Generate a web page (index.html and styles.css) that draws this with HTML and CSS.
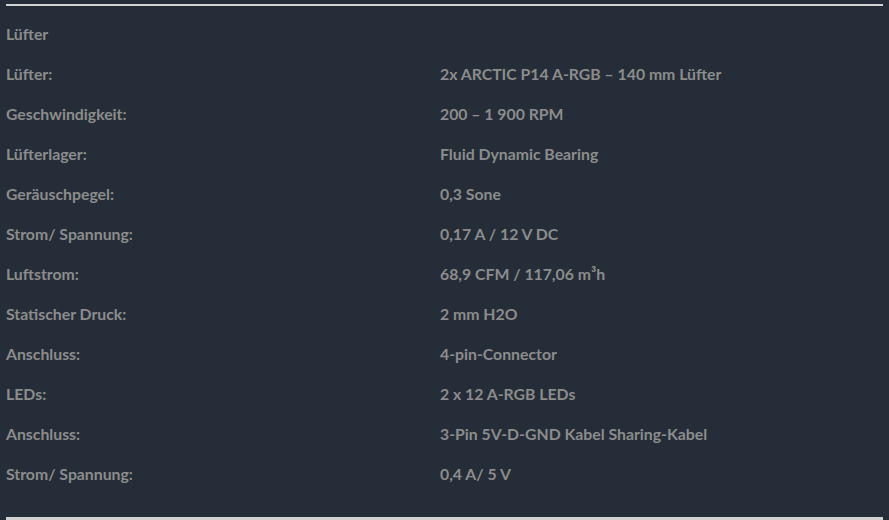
FILE: index.html
```html
<!DOCTYPE html>
<html>
<head>
<meta charset="utf-8">
<link rel="stylesheet" href="styles.css">
</head>
<body>
<div class="specs">
  <div class="rows">
    <div class="row"><div class="label">Lüfter</div><div class="value"></div></div>
    <div class="row"><div class="label">Lüfter:</div><div class="value">2x ARCTIC P14 A-RGB – 140 mm Lüfter</div></div>
    <div class="row"><div class="label">Geschwindigkeit:</div><div class="value">200 – 1 900 RPM</div></div>
    <div class="row"><div class="label">Lüfterlager:</div><div class="value">Fluid Dynamic Bearing</div></div>
    <div class="row"><div class="label">Geräuschpegel:</div><div class="value">0,3 Sone</div></div>
    <div class="row"><div class="label">Strom/ Spannung:</div><div class="value">0,17 A / 12 V DC</div></div>
    <div class="row"><div class="label">Luftstrom:</div><div class="value">68,9 CFM / 117,06 m³h</div></div>
    <div class="row"><div class="label">Statischer Druck:</div><div class="value">2 mm H2O</div></div>
    <div class="row"><div class="label">Anschluss:</div><div class="value">4-pin-Connector</div></div>
    <div class="row"><div class="label">LEDs:</div><div class="value">2 x 12 A-RGB LEDs</div></div>
    <div class="row"><div class="label">Anschluss:</div><div class="value">3-Pin 5V-D-GND Kabel Sharing-Kabel</div></div>
    <div class="row"><div class="label">Strom/ Spannung:</div><div class="value">0,4 A/ 5 V</div></div>
  </div>
</div>
</body>
</html>
```

FILE: styles.css
```css
html, body {
  margin: 0;
  padding: 0;
  background: #252e38;
  height: 100%;
  overflow: hidden;
}
body {
  font-family: Lato, "Liberation Sans", sans-serif;
  font-weight: 700;
  font-size: 15.8px;
  color: #8c8c8c;
}
.specs {
  margin: 4px 6px 0 6px;
  border-top: 2px solid #d2d2d2;
  border-bottom: 3px solid #d2d2d2;
  padding: 7px 0 24px 0;
}
.row {
  display: grid;
  grid-template-columns: 434px 1fr;
  height: 40px;
  align-items: center;
}
```
